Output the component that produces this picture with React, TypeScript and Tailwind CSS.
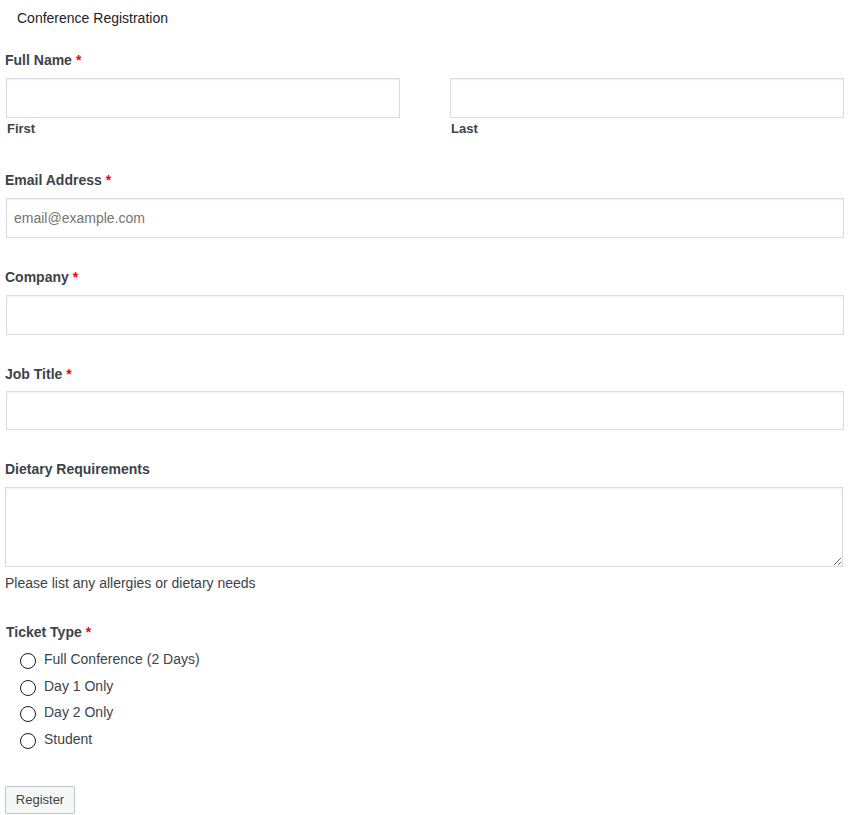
import React from 'react';

const inputCls =
  'block w-full h-[40px] border border-[#dcdcde] bg-white px-[7px] text-[14px] text-[#2c3338] shadow-[inset_0_1px_2px_rgba(0,0,0,0.07)] outline-none placeholder:text-[#757575]';

function Label({ text, required }: { text: string; required?: boolean }) {
  return (
    <div className="h-[20px] leading-[20px] text-[14px] font-bold text-[#3c434a]">
      {text}
      {required && <span className="text-[#ff0000] ml-[4px] font-bold">*</span>}
    </div>
  );
}

const tickets = ['Full Conference (2 Days)', 'Day 1 Only', 'Day 2 Only', 'Student'];

export default function App() {
  return (
    <div
      className="w-[850px] h-[815px] bg-white overflow-hidden text-[#3c434a]"
      style={{ fontFamily: '"Liberation Sans", Arial, sans-serif' }}
    >
      <div className="pl-[17px] pt-[8px] h-[20px] box-content leading-[20px] text-[14px] text-[#1d2327]">
        Conference Registration
      </div>

      <div className="pl-[5px] pr-[6px] pt-[22px]">
        {/* Full name */}
        <Label text="Full Name" required />
        <div className="mt-[8px] flex gap-[50px] pl-[1px]">
          <div className="flex-1">
            <input className={inputCls} />
            <div className="mt-[2px] h-[18px] leading-[18px] text-[13px] font-bold text-[#3c434a] pl-[1px]">First</div>
          </div>
          <div className="flex-1">
            <input className={inputCls} />
            <div className="mt-[2px] h-[18px] leading-[18px] text-[13px] font-bold text-[#3c434a] pl-[1px]">Last</div>
          </div>
        </div>

        {/* Email */}
        <div className="mt-[32px]">
          <Label text="Email Address" required />
          <div className="mt-[8px] pl-[1px]">
            <input className={inputCls} placeholder="email@example.com" />
          </div>
        </div>

        {/* Company */}
        <div className="mt-[29px]">
          <Label text="Company" required />
          <div className="mt-[8px] pl-[1px]">
            <input className={inputCls} />
          </div>
        </div>

        {/* Job title */}
        <div className="mt-[29px]">
          <Label text="Job Title" required />
          <div className="mt-[7px] pl-[1px]">
            <input className={inputCls + ' !h-[39px]'} />
          </div>
        </div>

        {/* Dietary */}
        <div className="mt-[29px]">
          <Label text="Dietary Requirements" />
          <textarea className="mt-[8px] block w-[838px] h-[80px] border border-[#dcdcde] bg-white shadow-[inset_0_1px_2px_rgba(0,0,0,0.07)] outline-none resize-y" />
          <div className="mt-[6px] h-[20px] leading-[20px] text-[14px] text-[#3c434a]">
            Please list any allergies or dietary needs
          </div>
        </div>

        {/* Ticket type */}
        <div className="mt-[29px] pl-[1px]">
          <Label text="Ticket Type" required />
          <div className="mt-[5px] flex flex-col">
            {tickets.map((t) => (
              <label key={t} className="flex items-center h-[26.5px] pl-[14px] cursor-pointer">
                <span className="w-[16px] h-[16px] rounded-full border-[1.5px] border-[#1e1e1e] bg-white shrink-0 mt-[2px]" />
                <span className="ml-[8px] text-[14px] text-[#3c434a] leading-[20px] -mt-[2px]">{t}</span>
              </label>
            ))}
          </div>
        </div>

        <button className="mt-[33px] h-[28px] w-[70px] rounded-[2px] border border-[#c3c4c7] bg-[#f6f7f7] text-[13px] text-[#3c434a]">
          Register
        </button>
      </div>
    </div>
  );
}
